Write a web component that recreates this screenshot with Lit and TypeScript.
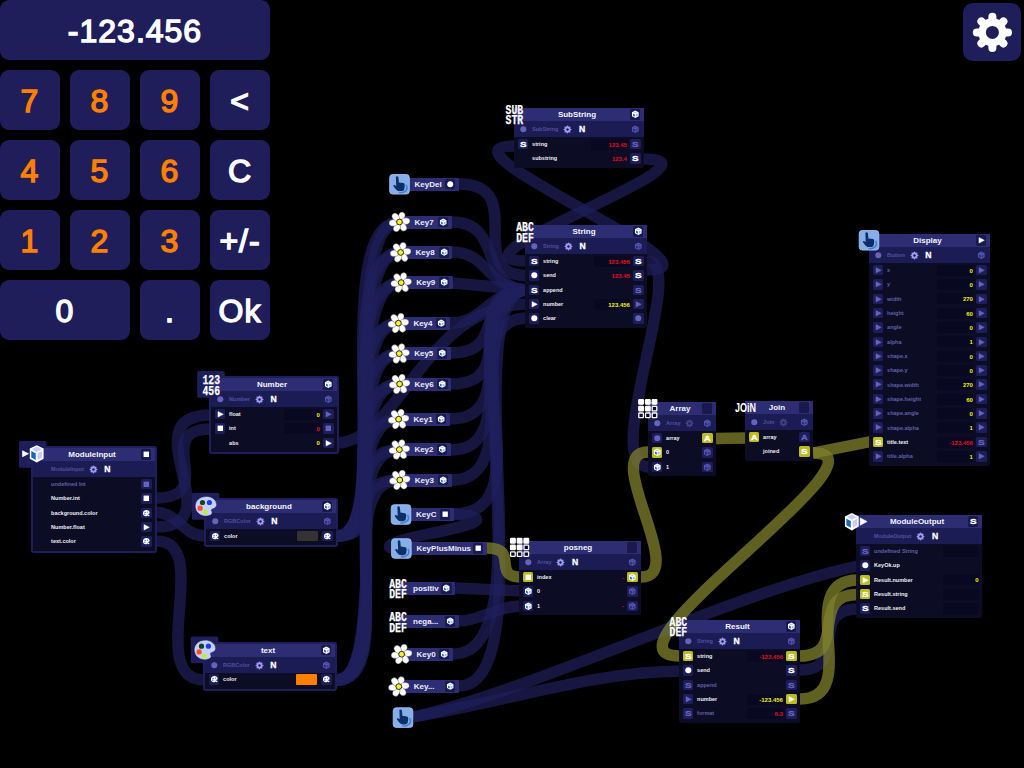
import { LitElement, html, svg, css, nothing } from "lit";
import { customElement, property } from "lit/decorators.js";
import { classMap } from "lit/directives/class-map.js";
import { styleMap } from "lit/directives/style-map.js";

/* Port code: a kind, followed by "-" for a dimmed port or "!" for a live one. */
type Row = { label: string; l?: string; r?: string; value?: string; tone?: string; dim?: boolean; field?: boolean; swatch?: string };
type GraphNode = {
  x: number; y: number; w: number; title: string; type: string; head: string; glyph: string; gx: number; gy: number;
  dot?: boolean; typeRight?: string; tools?: string; framed?: boolean; rows: Row[];
};
type Key = { x: number; y: number; right?: number; label?: string; port?: string; glyph: string };

const cube = (dim: boolean) => svg`
  <path d="M0 -3.7 L3.3 -2 L3.3 1.9 L0 3.7 L-3.3 1.9 L-3.3 -2Z" fill=${dim ? "#5656ae" : "#fff"} />
  <path d="M-2 -1.9 L0 -2.8 L2 -1.9 L0 -1Z" fill=${dim ? "#4848a0" : "#c3cdf5"} />
  <path d="M-2.3 -.7 L-.4 .2 L-.4 2.4 L-2.3 1.5Z" fill=${dim ? "#26267a" : "#1c74c4"} />
  <path d="M2.3 -.7 L.4 .2 L.4 2.4 L2.3 1.5Z" fill=${dim ? "#35358c" : "#9fb4e4"} />`;

const portShape = (kind: string, dim: boolean) => {
  const c = dim ? "#6464b8" : "#fff";
  switch (kind) {
    case "dot": return svg`<circle r="3" fill=${c} />`;
    case "tri": return svg`<path d="M-2.3 -2.7 L3 0 L-2.3 2.7Z" fill=${c} stroke=${c} stroke-width=".5" stroke-linejoin="round" />`;
    case "sq": return svg`<rect x="-2.7" y="-2.7" width="5.4" height="5.4" fill=${c} />`;
    case "cube": return cube(dim);
    case "pal": return svg`
      <path d="M-3.3 0 C-3.3 -4.3 3.5 -4.3 3.4 -.3 C3.2 .6 1.5 .4 1.5 1.6 C1.8 3.2 -3.3 4.2 -3.3 0Z" fill=${dim ? "#6060b8" : "#fff"} />
      <circle cx="-1.2" cy="-1" r=".6" fill="#20307a" /><circle cx="1.2" cy="-1.2" r=".6" fill="#1c74c4" />
      <circle cx="-1.4" cy="1" r=".7" fill="#1c74c4" /><circle cx="2.2" cy="2" r=".9" fill=${c} />`;
    case "S":
    case "A": return svg`<text y="2.8" text-anchor="middle" textLength="6.6" lengthAdjust="spacingAndGlyphs" x="0"
      font-family="Liberation Sans, sans-serif" font-weight="700" font-size="7.6" fill=${c} stroke=${c} stroke-width=".3">${kind}</text>`;
    default: return nothing;
  }
};

const port = (code?: string) => {
  if (code === undefined) return html`<span class="port blank"></span>`;
  const dim = code.endsWith("-");
  const live = code.endsWith("!");
  const kind = code.replace(/[-!]$/, "");
  return html`<span class=${classMap({ port: true, live, soft: dim })}>
    <svg viewBox="-5.25 -5.25 10.5 10.5">${portShape(kind, dim)}</svg></span>`;
};

const gear = (fill: string) => svg`<g>
  ${[0, 45, 90, 135, 180, 225, 270, 315].map((a) => svg`<path d="M0 -11 V-15.6" transform="rotate(${a})" stroke=${fill} stroke-width="8" stroke-linecap="round" />`)}
  <circle r="10.3" fill="none" stroke=${fill} stroke-width="7.6" /></g>`;

/* Two stacked words squeezed into a node badge. */
const words = (a: string, b: string) => svg`
  <g font-family="Liberation Mono, monospace" font-weight="700" font-size="13.4" fill="#fff" stroke="#fff" stroke-width=".25">
    <text x="-8.8" y="-.9" textLength="17.6" lengthAdjust="spacingAndGlyphs">${a}</text>
    <text x="-8.8" y="9.9" textLength="17.6" lengthAdjust="spacingAndGlyphs">${b}</text>
  </g>`;

const bigCube = svg`
  <path d="M0 -8.6 L6.9 -5.2 L6.9 4.9 L0 8.8 L-6.9 4.9 L-6.9 -5.2Z" fill="#fff" />
  <path d="M0 -7 L5 -4.6 L0 -1.9 L-5 -4.6Z" fill="#c6ccff" />
  <path d="M-5.4 -2.8 L-1 -.6 L-1 6.2 L-5.4 3.7Z" fill="#1468c0" />
  <path d="M5.4 -2.8 L1 -.6 L1 6.2 L5.4 3.7Z" fill="#c6ccff" />`;

const glyph = (name: string) => {
  switch (name) {
    case "sub": return words("SUB", "STR");
    case "abc": return words("ABC", "DEF");
    case "num": return words("123", "456");
    case "join": return svg`<text x="-10.5" y="4.8" textLength="21" lengthAdjust="spacingAndGlyphs" font-family="Liberation Sans, sans-serif"
      font-weight="700" font-size="13.6" fill="#fff">JOiN</text>`;
    case "grid": return svg`${[0, 1, 2, 3, 4, 5, 6, 7, 8].map((i) => svg`<rect x=${-9 + (i % 3) * 6.7} y=${-9 + Math.floor(i / 3) * 6.7}
      width="4.6" height="4.6" rx=".6" fill=${i < 5 ? "#fff" : "#0b0b24"} stroke="#fff" stroke-width="1.3" />`)}`;
    case "in": return svg`<g>${bigCube}<path d="M-14.5 -3.5 L-7.5 0 L-14.5 3.5Z" fill="#fff" /></g>`;
    case "out": return svg`<g>${bigCube}<path d="M8.3 -3.7 L15.3 0 L8.3 3.7Z" fill="#fff" stroke="#fff" stroke-width=".6" /></g>`;
    case "palette": return svg`
      <path d="M-10 0 C-10.4 -12 10 -12.4 10.3 -1.5 C10 2.8 5.4 1 5 4 C6 7 7 8 1 9.2 C-5 9.6 -10 6 -10 0Z" fill="#c6cfff" stroke="#dde2ff" stroke-width=".5" />
      <circle cx="-3.3" cy="-3.8" r="2.6" fill="#0b4a18" /><circle cx="3.6" cy="-3.8" r="2.6" fill="#1a3cf0" />
      <circle cx="-5.7" cy="1.9" r="2.6" fill="#ff4a22" /><circle cx="-.6" cy="5.9" r="2.6" fill="#b8ee4c" />`;
    case "flower": return svg`
      <g fill="#fff" stroke="#33333c" stroke-width=".35">
        ${[20, 82, 145, 205, 262, 322].map((a) => svg`<ellipse cx="0" cy="-6.1" rx="3.3" ry="4.4" transform="rotate(${a})" />`)}
      </g><circle r="2.9" fill="#f7f02c" stroke="#15151c" stroke-width=".9" />`;
    case "hand": return svg`
      <rect x="-9.8" y="-9.8" width="19.6" height="19.6" rx="3" fill="#86aeea" stroke="#a9c8f5" stroke-width=".8" />
      <path d="M6.5 .5 C9.5 5 5 9 -.5 8.3" fill="none" stroke="#3f7ed0" stroke-width="1.5" />
      <path d="M-3.6 -7.6 Q-2.2 -8.8 -1.1 -7.3 L-.6 -1.9 L3.9 -1.2 Q5.2 -.9 5.2 .5 L5 3.6 Q4.6 6.8 1.2 6.8 L-1.6 6.6 Q-3.2 6 -6 2 Q-6.6 .4 -5 .6 L-3.3 1.6Z"
        fill="#0c2f66" />`;
    default: return nothing;
  }
};

const cw = (label: string, l?: string, r?: string, extra: Partial<Row> = {}): Row => ({ label, l, r, ...extra });
const num = (label: string, value: string): Row => cw(label, "tri-", "tri-", { value, tone: "y", dim: true, field: true });

const NODES: GraphNode[] = [
  { x: 514, y: 108, w: 130, title: "SubString", type: "SubString", head: "cube", glyph: "sub", gx: 514.4, gy: 114.5, dot: true, typeRight: "cube-", tools: "gn",
    rows: [cw("string", "S", "S-", { value: "123.45", tone: "r", field: true }), cw("substring", undefined, "S", { value: "123.4", tone: "r" })] },
  { x: 525, y: 225, w: 122, title: "String", type: "String", head: "cube", glyph: "abc", gx: 525, gy: 232, dot: true, typeRight: "cube-", tools: "gn",
    rows: [cw("string", "S", "S", { value: "123.456", tone: "r", field: true }), cw("send", "dot", "S", { value: "123.45", tone: "r" }), cw("append", "S", "S-"),
      cw("number", "tri", "tri-", { value: "123.456", tone: "y", field: true }), cw("clear", "dot", "dot-")] },
  { x: 211, y: 378, w: 126, title: "Number", type: "Number", head: "cube", glyph: "num", gx: 211.2, gy: 384.6, dot: true, typeRight: "cube-", tools: "gn", framed: true,
    rows: [cw("float", "tri", "tri-", { value: "0", tone: "y", field: true }), cw("int", "sq", "sq-", { value: "0", tone: "r", field: true }), cw("abs", undefined, "tri", { value: "0", tone: "y" })] },
  { x: 33, y: 448, w: 122, title: "ModuleInput", type: "ModuleInput", head: "sq", glyph: "in", gx: 36.7, gy: 453.8, tools: "gn", framed: true,
    rows: [cw("undefined Int", undefined, "sq-", { dim: true }), cw("Number.int", undefined, "sq"), cw("background.color", undefined, "pal"), cw("Number.float", undefined, "tri"), cw("text.color", undefined, "pal")] },
  { x: 206, y: 500, w: 130, title: "background", type: "RGBColor", head: "cube", glyph: "palette", gx: 205.8, gy: 506.3, dot: true, typeRight: "cube-", tools: "gn", framed: true,
    rows: [cw("color", "pal", "pal", { swatch: "#333333" })] },
  { x: 205, y: 643.5, w: 130, title: "text", type: "RGBColor", head: "cube", glyph: "palette", gx: 204.8, gy: 650, dot: true, typeRight: "cube-", tools: "gn", framed: true,
    rows: [cw("color", "pal", "pal", { swatch: "#ff8000" })] },
  { x: 869, y: 234, w: 121, title: "Display", type: "Button", head: "tri", glyph: "hand", gx: 869, gy: 240.3, dot: true, typeRight: "cube-", tools: "gn",
    rows: [num("x", "0"), num("y", "0"), num("width", "270"), num("height", "60"), num("angle", "0"), num("alpha", "1"), num("shape.x", "0"), num("shape.y", "0"),
      num("shape.width", "270"), num("shape.height", "60"), num("shape.angle", "0"), num("shape.alpha", "1"),
      cw("title.text", "S!", "S-", { value: "-123.456", tone: "r", field: true }), num("title.alpha", "1")] },
  { x: 648, y: 402, w: 68, title: "Array", type: "Array", head: "none", glyph: "grid", gx: 647.8, gy: 408.6, dot: true, typeRight: "cube-", tools: "g",
    rows: [cw("array", "dot-", "A!"), cw("0", "cube!", "cube-"), cw("1", "cube", "cube-")] },
  { x: 745, y: 401, w: 68, title: "Join", type: "Join", head: "none", glyph: "join", gx: 745.6, gy: 407.6, dot: true, typeRight: "cube-", tools: "g",
    rows: [cw("array", "A!", "A-"), cw("joined", undefined, "S!")] },
  { x: 519, y: 541, w: 122, title: "posneg", type: "Array", head: "none", glyph: "grid", gx: 519.6, gy: 547.4, dot: true, typeRight: "cube-", tools: "gn",
    rows: [cw("index", "sq!", "cube!", { value: "-", tone: "r" }), cw("0", "cube", "cube-"), cw("1", "cube", "cube-", { value: "-", tone: "r" })] },
  { x: 679, y: 620, w: 121, title: "Result", type: "String", head: "cube", glyph: "abc", gx: 678.4, gy: 626.5, dot: true, typeRight: "cube-", tools: "gn",
    rows: [cw("string", "S!", "S!", { value: "-123.456", tone: "r", field: true }), cw("send", "dot", "S"), cw("append", "S-", "S-", { dim: true }),
      cw("number", "tri-", "tri!", { value: "-123.456", tone: "y", field: true }), cw("format", "S-", "S-", { value: "6.3", tone: "r", field: true, dim: true })] },
  { x: 856, y: 515, w: 126, title: "ModuleOutput", type: "ModuleOutput", head: "S", glyph: "out", gx: 851.8, gy: 521.6, tools: "gn",
    rows: [cw("undefined String", "S-", undefined, { value: "", field: true, dim: true }), cw("KeyOk.up", "dot"), cw("Result.number", "tri!", undefined, { value: "0", tone: "y", field: true }),
      cw("Result.string", "S!", undefined, { value: "", field: true }), cw("Result.send", "S", undefined, { value: "", field: true })] },
];

const KEYS: Key[] = [
  { x: 399.5, y: 184.3, right: 458.7, label: "KeyDel", port: "dot", glyph: "hand" },
  { x: 399.5, y: 222, right: 451.7, label: "Key7", port: "cube", glyph: "flower" },
  { x: 400.6, y: 252.4, right: 452.5, label: "Key8", port: "cube", glyph: "flower" },
  { x: 401.2, y: 282.6, right: 453, label: "Key9", port: "cube", glyph: "flower" },
  { x: 398.4, y: 323.2, right: 450, label: "Key4", port: "cube", glyph: "flower" },
  { x: 399.2, y: 353.6, right: 451, label: "Key5", port: "cube", glyph: "flower" },
  { x: 399.6, y: 384, right: 451.3, label: "Key6", port: "cube", glyph: "flower" },
  { x: 398.6, y: 419.2, right: 450, label: "Key1", port: "cube", glyph: "flower" },
  { x: 399.4, y: 449.6, right: 451, label: "Key2", port: "cube", glyph: "flower" },
  { x: 399.8, y: 480, right: 451.8, label: "Key3", port: "cube", glyph: "flower" },
  { x: 401, y: 514.5, right: 453.7, label: "KeyC", port: "sq", glyph: "hand" },
  { x: 401.4, y: 548.5, right: 486.8, label: "KeyPlusMinus", port: "sq", glyph: "hand" },
  { x: 398, y: 588.4, right: 455.3, label: "positiv", port: "cube", glyph: "abc" },
  { x: 398, y: 621.6, right: 458.6, label: "nega...", port: "cube", glyph: "abc" },
  { x: 401.6, y: 654.2, right: 453, label: "Key0", port: "cube", glyph: "flower" },
  { x: 398.8, y: 686.6, right: 459, label: "Key...", port: "cube", glyph: "flower" },
  { x: 403, y: 717.6, glyph: "hand" },
];

const NUM_KEYS = KEYS.slice(1, 10);

const BLUE: string[] = [
  "M459 184 C530 184 462 274 526 275.5",
  "M452 222 C505 222 478 290 528 290",
  "M452 252 C489 252 487 290 528 290",
  "M453 283 L528 290",
  "M450 323 C486 323 488 290 528 290",
  "M451 353 C510 353 470 290 528 290",
  "M451 384 C525 384 455 290 528 290",
  "M450 419 C528 419 452 290 528 290",
  "M451 450 C530 450 450 290 528 290",
  "M452 480 C534 480 448 290 528 290",
  "M454 514 C550 514 442 318 528 318",
  "M454 514 C500 518 468 526 428 534 C385 543 380 549 403 549",
  "M453 654 C552 654 444 290 528 290",
  "M459 686 C548 686 452 290 528 290",
  "M338 443 C400 440 425 304 528 304",
  "M514 146 C425 146 735 270 647 270",
  "M644 159 C737 159 432 261 526 261",
  "M647 261 C690 261 598 467 649 467",
  "M156 498 C220 498 150 429 211 429",
  "M156 527 C235 527 128 415 211 415",
  "M156 512 C180 514 182 536 206 536",
  "M156 541 C215 541 143 680 205 680",
  "M455 588 L521 591",
  "M459 621 C480 621 498 606 521 606",
  "M413 717 C530 692 740 590 858 566",
  "M413 717 C510 701 590 672 681 671",
  "M800 670 C850 670 807 609 858 609",
  ...NUM_KEYS.map((k) => `M337 536 C${385 + (536 - k.y) * 0.035} 536 ${345 - (536 - k.y) * 0.06} ${k.y} ${k.x} ${k.y}`),
  ...NUM_KEYS.map((k) => `M337 680 C402 680 328 ${k.y} ${k.x} ${k.y}`),
];

const GOLD: string[] = [
  "M487 548 C520 548 491 577 521 577",
  "M641 577 C690 577 600 452 648 452",
  "M716 438.5 L746 438",
  "M813 453 L871 441.5",
  "M813 453 C900 452 586 656 680 656",
  "M800 656 C850 656 807 594.5 858 594.5",
  "M800 699 C865 699 791 580 858 580",
];

@customElement("graph-node")
export class GraphNodeElement extends LitElement {
  @property({ attribute: false }) node!: GraphNode;

  static styles = css`
    :host { display: block; font: 700 5.5px/1 "Liberation Sans", Arial, sans-serif; color: #eeeef6; white-space: nowrap; }
    .card { display: flex; flex-direction: column; background: rgba(13, 13, 39, 0.94); border-radius: 0 0 2px 2px; padding-bottom: 2px; }
    .framed { box-shadow: 0 0 0 2px #1e1e5a; border-radius: 1px; }
    .head { display: grid; grid-template-columns: 7px 1fr 11px; align-items: center; height: 13px; padding: 0 3.5px; background: #2d2d74; }
    .title { text-align: center; font-size: 8px; line-height: 13px; color: #f4f4fa; }
    .type { display: flex; align-items: center; box-sizing: border-box; height: 16px; padding: 1.4px 3.5px 0; background: #1c1c55; color: #5050a0; }
    .row { display: flex; align-items: center; height: 14.33px; padding: 0 3.5px; }
    .label { margin-left: 4px; padding-top: 1px; }
    .dim { color: #6060aa; }
    .grow { flex: 1; }
    .port { display: block; flex: none; width: 10.6px; height: 10.6px; border-radius: 1.5px; background: #1d1d5a; }
    .port svg, .tool { display: block; width: 100%; height: 100%; }
    .head .port { background: #191950; }
    .type .port { background: none; }
    .port.live { background: #bcbc1c; }
    .port.blank { background: none; }
    .tool { width: 9px; height: 9px; margin-left: 5px; }
    .off { opacity: 0.3; }
    .n { margin-left: 6.5px; font-size: 8.6px; color: #fff; -webkit-text-stroke: 0.3px #fff; }
    .value { width: 36px; height: 11px; line-height: 12px; margin-right: 3px; text-align: right; font-size: 6px; }
    .field { background: #080822; }
    .y { color: #f0f016; }
    .r { color: #e80c1c; }
    .swatch { width: 21px; height: 10.5px; margin-right: 4px; border-radius: 1px; }
    .end { margin-right: 0; }
  `;

  render() {
    const n = this.node;
    return html`<div class=${classMap({ card: true, framed: !!n.framed })}>
      <div class="head"><span></span><span class="title">${n.title}</span>${port(n.head)}</div>
      <div class="type">
        ${port(n.dot ? "dot-" : undefined)}<span class="label">${n.type}</span>
        <svg class=${classMap({ tool: true, off: n.tools === "g" })} viewBox="-22 -22 44 44">${gear("#9c9cf0")}</svg>
        ${n.tools === "gn" ? html`<span class="n">N</span>` : nothing}
        <span class="grow"></span>${port(n.typeRight)}
      </div>
      ${n.rows.map((r) => html`<div class="row">
        ${port(r.l)}<span class=${classMap({ label: true, dim: !!r.dim })}>${r.label}</span><span class="grow"></span>
        ${r.swatch ? html`<span class="swatch" style=${styleMap({ background: r.swatch })}></span>` : nothing}
        ${r.value !== undefined ? html`<span class=${classMap({ value: true, field: !!r.field, y: r.tone === "y", r: r.tone === "r", end: n.glyph === "out" })}>${r.value}</span>` : nothing}
        ${n.glyph === "out" ? nothing : port(r.r)}
      </div>`)}
    </div>`;
  }
}

@customElement("key-chip")
export class KeyChip extends LitElement {
  @property() label = "";
  @property() kind = "cube";

  static styles = css`
    .chip { display: flex; align-items: center; justify-content: space-between; height: 13px; box-sizing: border-box; padding: 0 3.5px 0 15px;
      background: #2d2d74; border-radius: 0 1px 1px 0; font: 700 8px/13px "Liberation Sans", Arial, sans-serif; color: #eeeef6; white-space: nowrap; }
    .port { display: block; flex: none; width: 10.4px; height: 10.4px; border-radius: 1.5px; background: #1a1a52; }
    .port svg { display: block; width: 100%; height: 100%; }
  `;

  render() {
    return html`<div class="chip"><span>${this.label}</span>${port(this.kind)}</div>`;
  }
}

@customElement("key-pad")
export class KeyPad extends LitElement {
  static styles = css`
    .pad { display: grid; grid-template-columns: repeat(4, 60px); grid-auto-rows: 60px; gap: 10px; width: 270px;
      font: 400 32px/62px "Liberation Sans", Arial, sans-serif; }
    .key { background: #1f1e5a; border-radius: 9px; color: #fff; text-align: center; white-space: nowrap;
      letter-spacing: 1px; -webkit-text-stroke: 1.4px currentColor; }
    .digit { color: #ff8000; }
    .full { grid-column: span 4; }
    .wide { grid-column: span 2; }
  `;

  render() {
    const keys = ["7", "8", "9", "<", "4", "5", "6", "C", "1", "2", "3", "+/-", "0", ".", "Ok"];
    return html`<div class="pad">
      <div class="key full">-123.456</div>
      ${keys.map((k) => html`<div class=${classMap({ key: true, digit: /[1-9]/.test(k), wide: k === "0" })}>${k}</div>`)}
    </div>`;
  }
}

@customElement("app-root")
export class AppRoot extends LitElement {
  static styles = css`
    :host { display: block; width: 1024px; height: 768px; overflow: hidden; background: #000; }
    .stage { position: relative; width: 1024px; height: 768px; overflow: hidden; }
    .bar { display: flex; justify-content: space-between; align-items: flex-start; }
    .settings { width: 58px; height: 58px; margin: 3px 3px 0 0; border-radius: 10px; background: #1f1e5a; }
    .settings svg { display: block; width: 58px; height: 58px; }
    .layer { position: absolute; left: 0; top: 0; width: 1024px; height: 768px; pointer-events: none; }
    .item { position: absolute; }
  `;

  render() {
    return html`<div class="stage">
      <div class="bar">
        <key-pad></key-pad>
        <div class="settings"><svg viewBox="-29.4 -29.4 58 58">${gear("#fff")}</svg></div>
      </div>
      <svg class="layer" viewBox="0 0 1024 768" fill="none" stroke-width="11.4">
        ${BLUE.map((d) => svg`<path d=${d} stroke="#1f1f5c" stroke-opacity=".7" />`)}
        ${GOLD.map((d) => svg`<path d=${d} stroke="#80802c" stroke-opacity=".75" />`)}
        ${NODES.filter((n) => n.framed).map((n) => {
          const cx = n.glyph === "in" ? 33 : n.gx;
          return svg`<rect x=${cx - 14} y=${n.y - 7} width="27.5" height="26.7" rx="1.5" fill="#1e1e5a" />`;
        })}
      </svg>
      ${NODES.map((n) => html`<graph-node class="item" .node=${n} style=${styleMap({ left: `${n.x}px`, top: `${n.y}px`, width: `${n.w}px` })}></graph-node>`)}
      ${KEYS.filter((k) => k.label).map((k) => html`<key-chip class="item" label=${k.label!} kind=${k.port!}
        style=${styleMap({ left: `${k.x}px`, top: `${k.y - 6.5}px`, width: `${k.right! - k.x}px` })}></key-chip>`)}
      <svg class="layer" viewBox="0 0 1024 768">
        ${NODES.map((n) => svg`<g transform="translate(${n.gx} ${n.gy})">${glyph(n.glyph)}</g>`)}
        ${KEYS.map((k) => svg`<g transform="translate(${k.x} ${k.y})">${glyph(k.glyph)}</g>`)}
      </svg>
    </div>`;
  }
}
